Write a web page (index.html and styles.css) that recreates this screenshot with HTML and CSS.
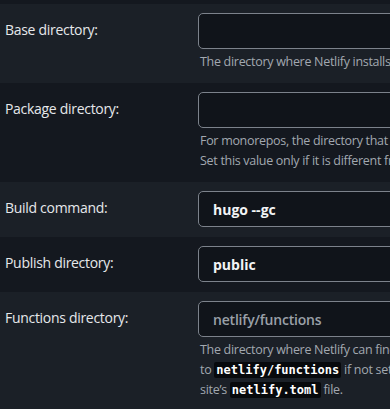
FILE: index.html
```html
<!DOCTYPE html>
<html lang="en">
<head>
    <meta charset="UTF-8">
    <meta name="viewport" content="width=device-width, initial-scale=1.0">
    <title>Build settings</title>
    <link rel="stylesheet" href="styles.css">
</head>
<body>
    <form class="build-settings">
        <div class="setting-row">
            <label class="setting-label" for="base-dir">Base directory:</label>
            <div class="setting-field">
                <input id="base-dir" class="setting-input" type="text">
                <p class="setting-help">The directory where Netlify installs dependencies and runs your build command.</p>
            </div>
        </div>

        <div class="setting-row">
            <label class="setting-label" for="package-dir">Package directory:</label>
            <div class="setting-field">
                <input id="package-dir" class="setting-input" type="text">
                <p class="setting-help">For monorepos, the directory that contains your site files, including the netlify.toml.<br>Set this value only if it is different from the base directory.</p>
            </div>
        </div>

        <div class="setting-row">
            <label class="setting-label" for="build-cmd">Build command:</label>
            <div class="setting-field">
                <input id="build-cmd" class="setting-input" type="text" value="hugo --gc">
            </div>
        </div>

        <div class="setting-row">
            <label class="setting-label" for="publish-dir">Publish directory:</label>
            <div class="setting-field">
                <input id="publish-dir" class="setting-input" type="text" value="public">
            </div>
        </div>

        <div class="setting-row">
            <label class="setting-label" for="functions-dir">Functions directory:</label>
            <div class="setting-field">
                <input id="functions-dir" class="setting-input" type="text" placeholder="netlify/functions">
                <p class="setting-help">The directory where Netlify can find your compiled functions to deploy them. Defaults<br>to <code>netlify/functions</code> if not set. This path is relative to the base directory and can also be set in your<br>site&rsquo;s <code>netlify.toml</code> file.</p>
            </div>
        </div>
    </form>
</body>
</html>
```

FILE: styles.css
```css
/* Page */
body {
    margin: 0;
    padding: 4px 0 0;
    background-color: #14181f;
    font-family: 'Segoe UI', 'Open Sans', sans-serif;
    color: #e6e8eb;
    overflow: hidden;
}

.build-settings {
    width: 900px;
    margin: 0;
}

/* Rows */
.setting-row {
    display: flex;
    padding: 9px 0 10px;
    background-color: #14181f;
}

.setting-row:nth-child(odd) {
    background-color: #1b2027;
}

.setting-label {
    width: 198px;
    padding: 7px 0 0 5px;
    box-sizing: border-box;
    font-size: 14px;
    line-height: 20px;
    letter-spacing: -0.3px;
    color: #e6e8eb;
}

.setting-field {
    flex: 1;
}

/* Inputs */
.setting-input {
    display: block;
    width: 100%;
    height: 36px;
    box-sizing: border-box;
    padding: 0 14px;
    background-color: #10141a;
    border: 1px solid #7c828b;
    border-radius: 5px;
    font-family: inherit;
    font-size: 14px;
    font-weight: 700;
    color: #f3f4f6;
    outline: none;
}

.setting-input::placeholder {
    color: #9aa0a8;
    font-weight: 600;
    letter-spacing: -0.2px;
}

/* Help text */
.setting-help {
    margin: 3px 0 0;
    padding: 0 0 1px 2px;
    font-size: 12.5px;
    line-height: 20px;
    letter-spacing: -0.3px;
    color: #a2a8b0;
    white-space: nowrap;
}

.setting-help code {
    padding: 1px 2px;
    background-color: #07090c;
    border-radius: 2px;
    font-family: 'DejaVu Sans Mono', monospace;
    font-size: 12px;
    font-weight: 700;
    letter-spacing: 0;
    color: #ffffff;
}
```
